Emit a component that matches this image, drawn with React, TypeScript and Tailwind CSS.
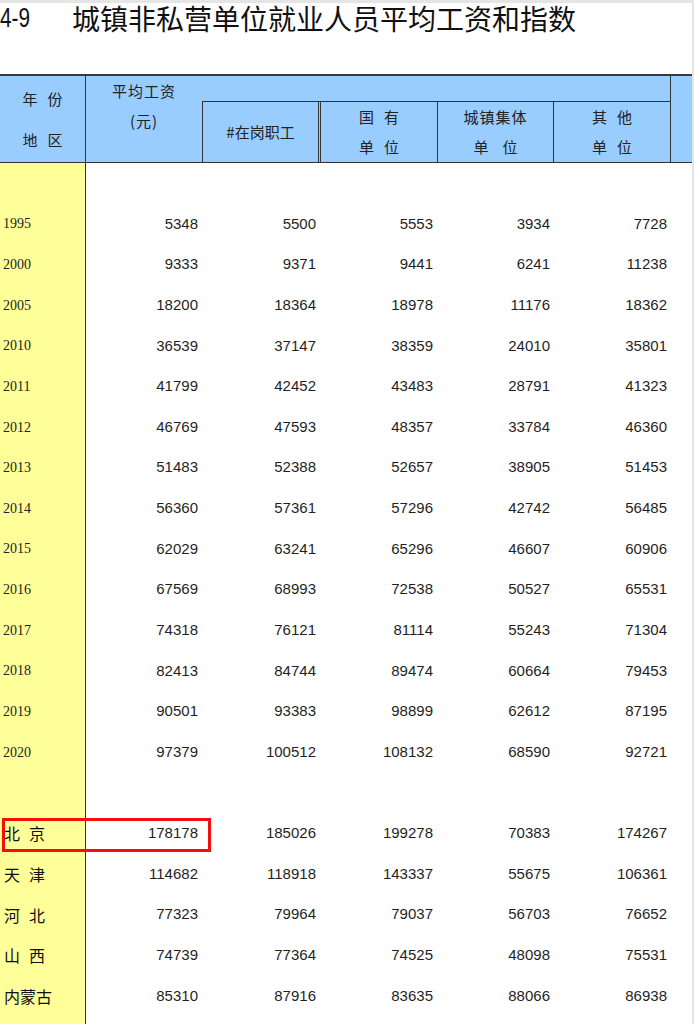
const CJK = "font-['Noto_Sans_CJK_SC',sans-serif]";
const NUM = "font-['Liberation_Sans',Arial,sans-serif]";

const yearRows: [string, number[]][] = [
  ["1995", [5348, 5500, 5553, 3934, 7728]],
  ["2000", [9333, 9371, 9441, 6241, 11238]],
  ["2005", [18200, 18364, 18978, 11176, 18362]],
  ["2010", [36539, 37147, 38359, 24010, 35801]],
  ["2011", [41799, 42452, 43483, 28791, 41323]],
  ["2012", [46769, 47593, 48357, 33784, 46360]],
  ["2013", [51483, 52388, 52657, 38905, 51453]],
  ["2014", [56360, 57361, 57296, 42742, 56485]],
  ["2015", [62029, 63241, 65296, 46607, 60906]],
  ["2016", [67569, 68993, 72538, 50527, 65531]],
  ["2017", [74318, 76121, 81114, 55243, 71304]],
  ["2018", [82413, 84744, 89474, 60664, 79453]],
  ["2019", [90501, 93383, 98899, 62612, 87195]],
  ["2020", [97379, 100512, 108132, 68590, 92721]],
];

const regionRows: [string[], number[]][] = [
  [["北", "京"], [178178, 185026, 199278, 70383, 174267]],
  [["天", "津"], [114682, 118918, 143337, 55675, 106361]],
  [["河", "北"], [77323, 79964, 79037, 56703, 76652]],
  [["山", "西"], [74739, 77364, 74525, 48098, 75531]],
  [["内蒙古"], [85310, 87916, 83635, 88066, 86938]],
];

// body column widths and right padding so numbers land on the printed edges
const COLS = [
  "w-[116px] pr-[4px]",
  "w-[118px] pr-[4px]",
  "w-[117px] pr-[4px]",
  "w-[116px] pr-[3px]",
  "w-[117px] pr-[3px]",
];

function Spaced({ chars, gap = "gap-[10px]" }: { chars: string[]; gap?: string }) {
  return (
    <div className={`flex ${gap}`}>
      {chars.map((c, i) => (
        <span key={i}>{c}</span>
      ))}
    </div>
  );
}

function Row({ label, values, highlight }: { label?: React.ReactNode; values?: number[]; highlight?: boolean }) {
  return (
    <div className="relative flex h-[40.63px] items-center">
      <div className="flex h-full w-[86px] shrink-0 items-center border-r border-[#333] bg-[#ffff99]">{label}</div>
      {values?.map((v, i) => (
        <div key={i} className={`${COLS[i]} shrink-0 text-right text-[15px] text-[#1f1f1f] ${NUM}`}>
          {v}
        </div>
      ))}
      {highlight ? (
        <div className="absolute left-[2px] top-[5px] h-[34px] w-[209px] border-[3px] border-[#f01010]" />
      ) : null}
    </div>
  );
}

export default function App() {
  return (
    <div className="h-[1024px] w-[694px] overflow-hidden border-r-2 border-t-[3px] border-[#e5e5e5] bg-white">
      <div className={`flex h-[71px] items-start text-[28px] leading-[30px] text-[#111] ${CJK}`}>
        <span className={`inline-block w-[30px] origin-left scale-x-[0.74] whitespace-nowrap ${NUM}`}>4-9</span>
        <span className="ml-[42px] whitespace-nowrap">城镇非私营单位就业人员平均工资和指数</span>
      </div>

      <div className="border-t-2 border-[#3a3a3a]">
        {/* header */}
        <div className={`flex h-[87px] border-b border-[#333] bg-[#99ccff] text-[15px] text-[#222] ${CJK}`}>
          <div className="flex w-[86px] shrink-0 flex-col items-center justify-center border-r border-[#333] leading-[41px]">
            <Spaced chars={["年", "份"]} />
            <Spaced chars={["地", "区"]} />
          </div>
          <div className="flex w-[116px] shrink-0 flex-col items-center leading-[30px] tracking-[1px]">
            <span>平均工资</span>
            <span>(元)</span>
          </div>
          <div className="flex w-[469px] shrink-0 flex-col border-r border-[#333]">
            <div className="h-[28px]" />
            <div className="flex flex-1 border-l border-t border-[#333] leading-[30px]">
              <div className="flex w-[116px] items-center justify-center border-r border-[#333]">#在岗职工</div>
              <div className="w-[1px]" />
              <div className="flex w-[118px] flex-col items-center justify-center border-x border-[#333]">
                <Spaced chars={["国", "有"]} />
                <Spaced chars={["单", "位"]} />
              </div>
              <div className="flex w-[116px] flex-col items-center justify-center border-r border-[#333]">
                <span className="tracking-[1px]">城镇集体</span>
                <Spaced chars={["单", "位"]} gap="gap-[14px]" />
              </div>
              <div className="flex flex-1 flex-col items-center justify-center">
                <Spaced chars={["其", "他"]} />
                <Spaced chars={["单", "位"]} />
              </div>
            </div>
          </div>
          <div className="flex-1" />
        </div>

        {/* body */}
        <Row />
        {yearRows.map(([year, values]) => (
          <Row
            key={year}
            label={<span className="pl-[3px] font-['Liberation_Serif',serif] text-[14px] text-[#222]">{year}</span>}
            values={values}
          />
        ))}
        <Row />
        {regionRows.map(([chars, values], i) => (
          <Row
            key={chars.join("")}
            highlight={i === 0}
            label={
              <div className={`pl-[4px] text-[16px] text-[#111] ${CJK}`}>
                <Spaced chars={chars} gap="gap-[9px]" />
              </div>
            }
            values={values}
          />
        ))}
        <Row />
      </div>
    </div>
  );
}
